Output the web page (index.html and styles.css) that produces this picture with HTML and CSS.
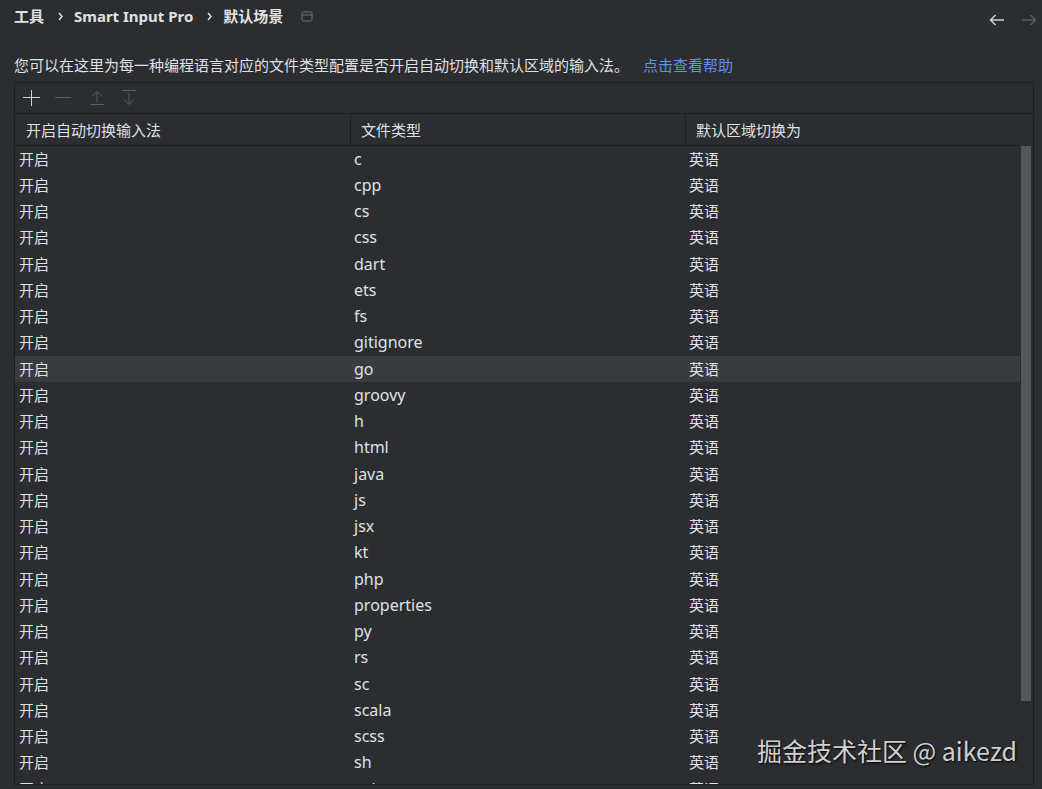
FILE: index.html
```html
<!DOCTYPE html>
<html lang="zh-CN">
<head>
    <meta charset="UTF-8">
    <meta name="viewport" content="width=device-width, initial-scale=1.0">
    <title>Smart Input Pro - 默认场景</title>
    <link rel="stylesheet" href="styles.css">
</head>
<body>
    <header class="topbar">
        <nav class="breadcrumb">
            <span>工具</span>
            <svg class="arrow" width="30" height="12" viewBox="0 0 30 12"><path d="M15 3l3 3.500-3 3.500"/></svg>
            <span>Smart Input Pro</span>
            <svg class="arrow" width="30" height="12" viewBox="0 0 30 12"><path d="M15 3l3 3.500-3 3.500"/></svg>
            <span>默认场景</span>
            <svg class="scope-icon" width="12" height="12" viewBox="0 0 12 12"><rect x="1" y="2" width="10" height="9" rx="1.500"/><path d="M1 5h10"/></svg>
        </nav>
        <div class="history">
            <button class="icon-btn" aria-label="后退"><svg width="16" height="16" viewBox="0 0 16 16"><path d="M15 8H1.500M6.500 3L1.500 8l5 5"/></svg></button>
            <button class="icon-btn" aria-label="前进" disabled><svg width="16" height="16" viewBox="0 0 16 16"><path d="M1 8h13.500M9.500 3l5 5-5 5"/></svg></button>
        </div>
    </header>
    <p class="intro">您可以在这里为每一种编程语言对应的文件类型配置是否开启自动切换和默认区域的输入法。<a href="#help">点击查看帮助</a></p>
    <main class="panel">
        <div class="toolbar">
            <button class="icon-btn" aria-label="添加"><svg width="18" height="18" viewBox="0 0 18 18"><path d="M9.500 1v16M1 8.500h17"/></svg></button>
            <button class="icon-btn" aria-label="删除" disabled><svg width="18" height="18" viewBox="0 0 18 18"><path d="M0 8.500h16"/></svg></button>
            <button class="icon-btn" aria-label="上移" disabled><svg width="18" height="18" viewBox="0 0 18 18"><path d="M9 13.500V2.500M4 7.500l5-5 5 5M2 15.500h14"/></svg></button>
            <button class="icon-btn" aria-label="下移" disabled><svg width="18" height="18" viewBox="0 0 18 18"><path d="M1 1.500h14M8 4v11M3 10.500l5 5 5-5"/></svg></button>
        </div>
        <div class="content">
            <div class="table-wrap">
                <table>
                    <thead>
                        <tr><th>开启自动切换输入法</th><th>文件类型</th><th>默认区域切换为</th></tr>
                    </thead>
                    <tbody>
                        <tr><td>开启</td><td>c</td><td>英语</td></tr>
                        <tr><td>开启</td><td>cpp</td><td>英语</td></tr>
                        <tr><td>开启</td><td>cs</td><td>英语</td></tr>
                        <tr><td>开启</td><td>css</td><td>英语</td></tr>
                        <tr><td>开启</td><td>dart</td><td>英语</td></tr>
                        <tr><td>开启</td><td>ets</td><td>英语</td></tr>
                        <tr><td>开启</td><td>fs</td><td>英语</td></tr>
                        <tr><td>开启</td><td>gitignore</td><td>英语</td></tr>
                        <tr class="hovered"><td>开启</td><td>go</td><td>英语</td></tr>
                        <tr><td>开启</td><td>groovy</td><td>英语</td></tr>
                        <tr><td>开启</td><td>h</td><td>英语</td></tr>
                        <tr><td>开启</td><td>html</td><td>英语</td></tr>
                        <tr><td>开启</td><td>java</td><td>英语</td></tr>
                        <tr><td>开启</td><td>js</td><td>英语</td></tr>
                        <tr><td>开启</td><td>jsx</td><td>英语</td></tr>
                        <tr><td>开启</td><td>kt</td><td>英语</td></tr>
                        <tr><td>开启</td><td>php</td><td>英语</td></tr>
                        <tr><td>开启</td><td>properties</td><td>英语</td></tr>
                        <tr><td>开启</td><td>py</td><td>英语</td></tr>
                        <tr><td>开启</td><td>rs</td><td>英语</td></tr>
                        <tr><td>开启</td><td>sc</td><td>英语</td></tr>
                        <tr><td>开启</td><td>scala</td><td>英语</td></tr>
                        <tr><td>开启</td><td>scss</td><td>英语</td></tr>
                        <tr><td>开启</td><td>sh</td><td>英语</td></tr>
                        <tr><td>开启</td><td>sql</td><td>英语</td></tr>
                    </tbody>
                </table>
            </div>
            <div class="scrollbar"><div class="thumb"></div></div>
        </div>
    </main>
    <div class="watermark">掘金技术社区 @ aikezd</div>
</body>
</html>
```
FILE: styles.css
```css
* { box-sizing: border-box; }
body {
    margin: 0;
    height: 100vh;
    padding: 0 8px 4px 14px;
    display: flex;
    flex-direction: column;
    overflow: hidden;
    background: #2b2d30;
    color: #dfe1e5;
    font-family: "Noto Sans", "Noto Sans CJK SC", sans-serif;
    font-size: 15px;
    line-height: 20px;
}
.topbar { display: flex; justify-content: space-between; height: 40px; margin-right: -3px; }
.breadcrumb { display: flex; align-items: center; height: 32px; font-weight: bold; }
.arrow { stroke-width: 1.5; }
.scope-icon { margin-left: 18px; stroke: #6f737a; }
.history { display: flex; align-items: center; gap: 16px; }
.history svg { stroke-width: 1.5; }
svg { display: block; fill: none; stroke: currentColor; }
.icon-btn { padding: 0; border: 0; background: none; color: #ced0d6; }
.icon-btn:disabled { color: #5a5d63; }
.intro { margin: 15px 0 7px; white-space: nowrap; }
.intro a { margin-left: 14px; color: #6490e6; text-decoration: none; }
.panel {
    flex: 1;
    min-height: 0;
    display: flex;
    flex-direction: column;
    border: 1px solid #1e1f22;
}
.toolbar {
    display: flex;
    align-items: center;
    flex: none;
    gap: 15px;
    height: 31px;
    padding-left: 7px;
    border-bottom: 1px solid #1e1f22;
}
.content { flex: 1; min-height: 0; display: flex; }
.table-wrap { flex: 1; overflow: hidden; }
table { width: 100%; table-layout: fixed; border-collapse: separate; border-spacing: 0; }
th {
    height: 32px;
    padding: 0 10px;
    border-bottom: 1px solid #1e1f22;
    border-left: 1px solid #1e1f22;
    text-align: left;
    font-weight: normal;
}
th:first-child { border-left-color: transparent; }
td { height: 26px; padding: 3px 4px 0; vertical-align: top; }
td:nth-child(2) { font-size: 16px; }
tbody tr:nth-child(4n) td { height: 27px; }
.hovered { background: #393b3f; }
.scrollbar { width: 13px; margin-top: 32px; padding: 0 2px 0 1px; }
.thumb { height: 87%; background: #555759; }
.watermark {
    position: absolute;
    right: 25px;
    bottom: 21px;
    color: #cfd0d1;
    font-family: "Noto Sans CJK SC", sans-serif;
    font-size: 25px;
    line-height: 36px;
    text-shadow: 1px 1px 2px #000;
}
```
